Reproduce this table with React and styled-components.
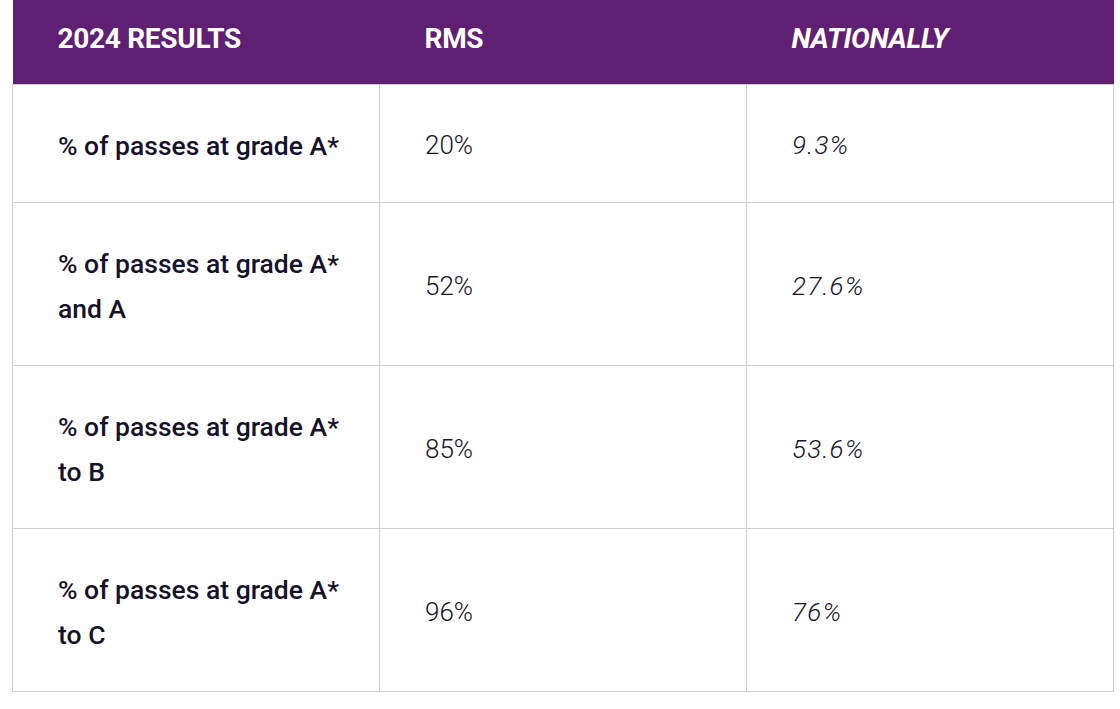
import React from "react";
import styled, { createGlobalStyle } from "styled-components";

const GlobalStyle = createGlobalStyle`
  body {
    margin: 0;
    background: #fff;
    font-family: Roboto, "Noto Sans", sans-serif;
  }
`;

const Wrapper = styled.div`
  padding: 0 6px 0 12px;
`;

const Table = styled.table`
  width: 1102px;
  border-collapse: collapse;
  table-layout: fixed;
`;

const HeadCell = styled.th`
  background: #5f2073;
  color: #fff;
  height: 76px;
  padding: 0 20px 8px 45px;
  text-align: left;
  font-size: 28px;
  font-weight: 700;
  font-style: ${(p) => (p.italic ? "italic" : "normal")};
  letter-spacing: -0.3px;
`;

const Cell = styled.td`
  border: 1px solid #cfcfcf;
  padding: 38px 30px 34px 45px;
  line-height: 45px;
  font-size: ${(p) => (p.label ? "26.5px" : "26px")};
  color: #17122b;
  vertical-align: middle;
  font-weight: ${(p) => (p.label ? 500 : 300)};
  font-style: ${(p) => (p.italic ? "italic" : "normal")};
  letter-spacing: ${(p) => (p.italic ? "1.2px" : "0")};
`;

const rows = [
  ["% of passes at grade A*", "20%", "9.3%"],
  ["% of passes at grade A* and A", "52%", "27.6%"],
  ["% of passes at grade A* to B", "85%", "53.6%"],
  ["% of passes at grade A* to C", "96%", "76%"],
];

export default function App() {
  return (
    <>
      <GlobalStyle />
      <Wrapper>
        <Table>
          <thead>
            <tr>
              <HeadCell>2024 RESULTS</HeadCell>
              <HeadCell>RMS</HeadCell>
              <HeadCell italic>NATIONALLY</HeadCell>
            </tr>
          </thead>
          <tbody>
            {rows.map(([label, rms, nat]) => (
              <tr key={label}>
                <Cell label>{label}</Cell>
                <Cell>{rms}</Cell>
                <Cell italic>{nat}</Cell>
              </tr>
            ))}
          </tbody>
        </Table>
      </Wrapper>
    </>
  );
}
